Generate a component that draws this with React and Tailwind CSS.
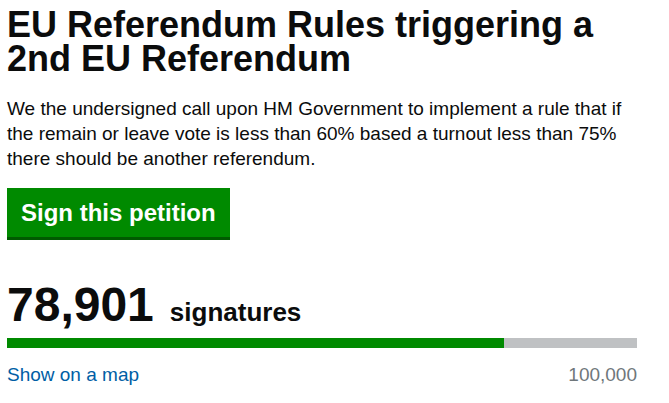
export default function App() {
  const count = 78901;
  const goal = 100000;
  const pct = (count / goal) * 100;

  return (
    <div className="min-h-screen bg-white font-['Liberation_Sans',Arial,sans-serif] text-[#0b0c0c]">
      <div className="w-[630px] ml-[7px] pt-[8px]">
        <h1 className="text-[36px] leading-[34px] font-bold">
          EU Referendum Rules triggering a 2nd EU Referendum
        </h1>
        <p className="mt-[20px] text-[19px] leading-[25px]">
          We the undersigned call upon HM Government to implement a rule that if the remain or leave vote is less than 60% based a turnout less than 75% there should be another referendum.
        </p>
        <button className="mt-[17px] h-[52px] px-[14px] bg-[#008a00] text-white text-[24px] font-bold border-b-[3px] border-[#005a00]">
          Sign this petition
        </button>
        <div className="mt-[41px] flex items-baseline gap-[16px]">
          <span className="text-[48px] leading-[48px] font-bold">78,901</span>
          <span className="text-[26px] leading-none font-bold">signatures</span>
        </div>
        <div className="mt-[9px] h-[10px] bg-[#bfc1c3]">
          <div className="h-full bg-[#008a00]" style={{ width: `${pct}%` }} />
        </div>
        <div className="mt-[14px] flex justify-between text-[19px] leading-[26px]">
          <a href="#" className="text-[#005ea5]">Show on a map</a>
          <span className="text-[#6f777b]">100,000</span>
        </div>
      </div>
    </div>
  );
}
